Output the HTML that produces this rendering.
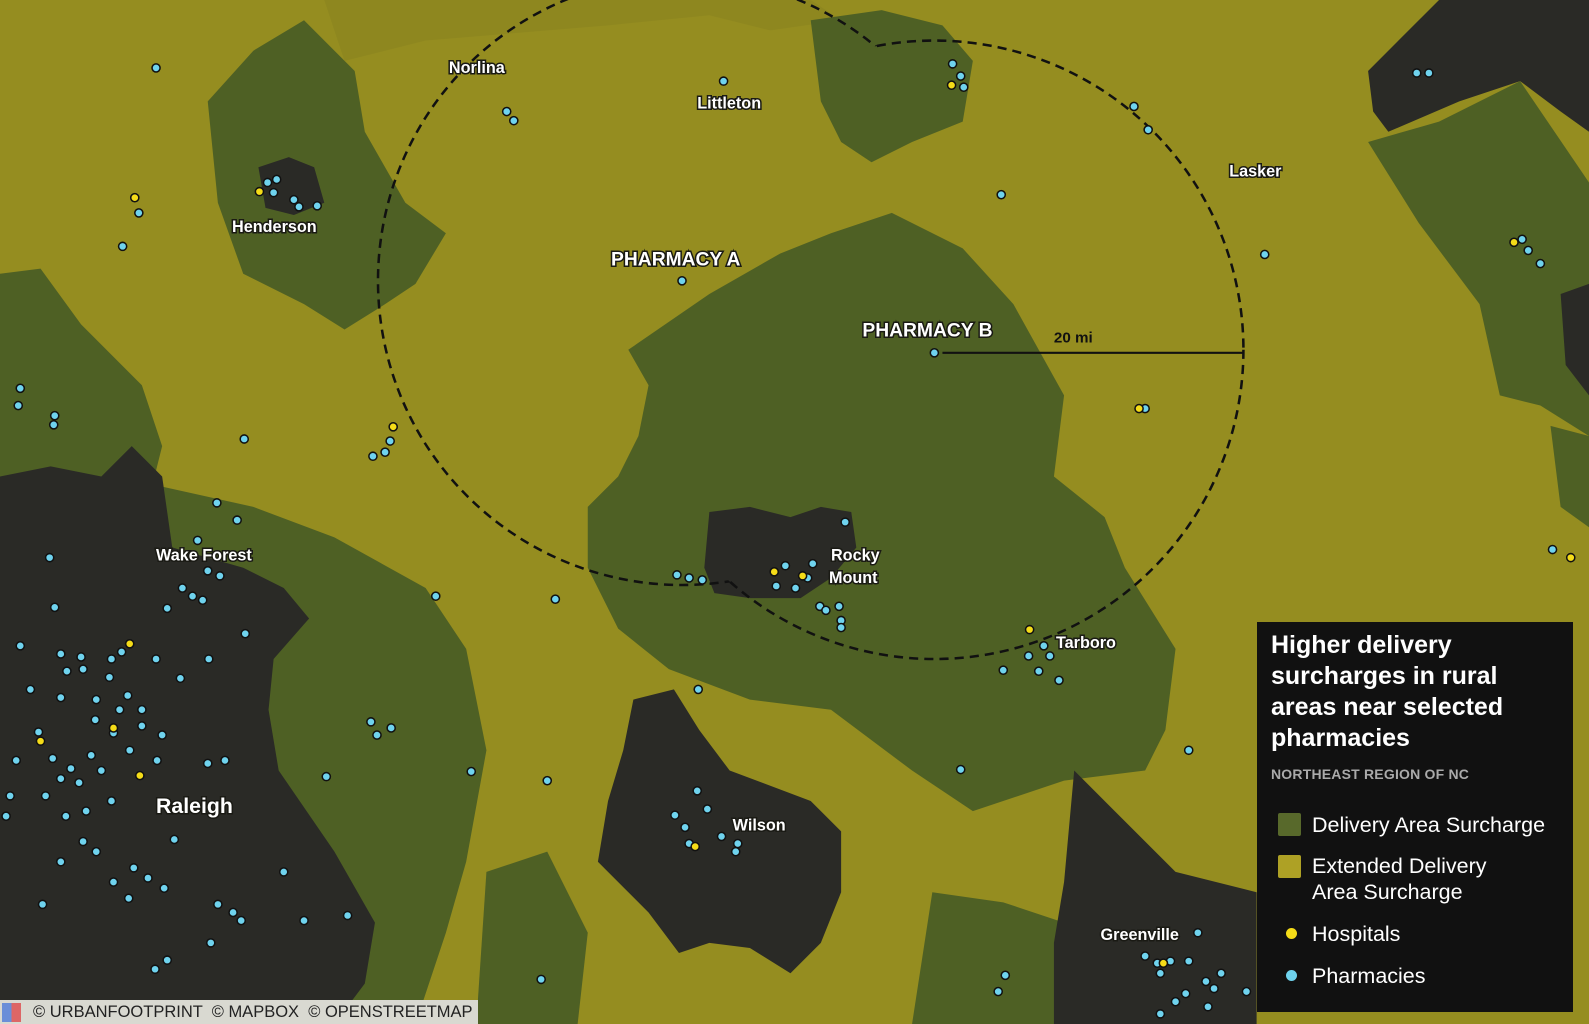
<!DOCTYPE html>
<html><head><meta charset="utf-8"><style>
html,body{margin:0;padding:0;width:1589px;height:1024px;overflow:hidden;background:#958d20;font-family:"Liberation Sans",sans-serif}
svg{position:absolute;left:0;top:0}
.lbl{font-family:"Liberation Sans",sans-serif;font-weight:bold;fill:#fff;stroke:#1a1a14;stroke-width:3;paint-order:stroke;}
#leg{position:absolute;left:1257px;top:622px;width:316px;height:390px;background:#111;color:#fff}
#leg h1{margin:0;position:absolute;left:14px;top:8px;font-size:25px;line-height:31px;font-weight:bold;width:250px}
#leg .sub{position:absolute;left:14px;top:144px;font-size:14px;color:#aaa;font-weight:bold;letter-spacing:.2px}
.it{position:absolute;left:21px;font-size:21.5px;line-height:26px;color:#fff}
.sw{position:absolute;left:21px;width:23px;height:23px;border-radius:2px}
.dt{position:absolute;left:29px;width:11px;height:11px;border-radius:50%}
#attr{position:absolute;left:0;top:1000px;width:478px;height:24px;background:#d9d9d1;color:#222;font-size:16.5px;line-height:24px;white-space:nowrap}
</style></head><body>
<svg width="1589" height="1024" viewBox="0 0 1568 1010" preserveAspectRatio="none">
<defs>
<mask id="mA"><rect width="1568" height="1010" fill="#fff"/><circle cx="922" cy="345" r="305" fill="#000"/></mask>
<mask id="mB"><rect width="1568" height="1010" fill="#fff"/><circle cx="673" cy="277" r="300" fill="#000"/></mask>
</defs>
<rect width="1568" height="1010" fill="#958d20"/>
<path d="M320 0 L800 0 L830 20 L760 30 L700 15 L600 25 L420 40 L340 60Z" fill="#8a8420" opacity=".6"/>
<g fill="#4e6024">
<path d="M205 100 L250 50 L300 20 L350 70 L360 130 L400 200 L440 230 L410 280 L380 300 L340 325 L300 300 L240 270 L215 200Z"/>
<path d="M620 345 L700 290 L770 250 L820 230 L880 210 L950 245 L1000 300 L1050 390 L1040 470 L1090 510 L1110 560 L1160 640 L1150 720 L1130 760 L1050 770 L960 800 L900 760 L820 700 L740 690 L660 660 L610 620 L580 560 L580 500 L610 470 L630 430 L640 380Z"/>
<path d="M800 20 L870 10 L930 25 L960 60 L950 120 L900 140 L860 160 L830 140 L810 100Z"/>
<path d="M0 270 L40 265 L80 320 L140 380 L160 440 L150 480 L60 470 L0 500Z"/>
<path d="M160 480 L250 500 L330 530 L420 580 L460 640 L480 740 L460 850 L440 920 L410 1010 L320 1010 L300 900 L260 760 L240 660 L170 560Z"/>
<path d="M1350 140 L1420 120 L1500 80 L1568 180 L1568 430 L1520 400 L1480 390 L1460 300 L1400 220Z"/>
<path d="M480 860 L540 840 L580 920 L570 1010 L470 1010Z"/>
<path d="M920 880 L990 890 L1050 910 L1060 1010 L900 1010Z"/>
<path d="M1530 420 L1568 430 L1568 520 L1540 500Z"/>
</g>
<g fill="#2a2a26">
<path d="M0 470 L50 460 L100 470 L130 440 L160 470 L170 540 L240 560 L280 580 L305 610 L270 650 L265 700 L275 760 L330 840 L370 910 L360 970 L330 1010 L0 1010Z"/>
<path d="M700 505 L740 500 L780 510 L810 500 L840 505 L845 540 L820 570 L790 590 L740 590 L705 585 L695 560Z"/>
<path d="M625 690 L665 680 L690 720 L720 760 L800 790 L830 820 L830 880 L810 930 L780 960 L740 935 L700 930 L670 940 L640 900 L590 850 L600 790 L615 740Z"/>
<path d="M1060 760 L1100 800 L1160 860 L1240 880 L1240 1010 L1040 1010 L1040 930 L1050 870Z"/>
<path d="M1350 70 L1380 40 L1420 0 L1568 0 L1568 130 L1540 110 L1500 80 L1440 100 L1370 130 L1355 110Z"/>
<path d="M255 165 L285 155 L310 165 L320 200 L290 212 L262 205Z"/>
<path d="M1540 290 L1568 280 L1568 390 L1545 360Z"/>
</g>
<circle cx="673" cy="277" r="300" fill="none" stroke="#111" stroke-width="2.5" stroke-dasharray="9 6" mask="url(#mA)"/>
<circle cx="922" cy="345" r="305" fill="none" stroke="#111" stroke-width="2.5" stroke-dasharray="9 6" mask="url(#mB)"/>
<line x1="930" y1="348" x2="1227" y2="348" stroke="#111" stroke-width="2"/>
<text x="1040" y="338" font-size="15" font-weight="bold" fill="#111" font-family="Liberation Sans">20 mi</text>
<g fill="#6fd3ee" stroke="#111" stroke-width="1.5">
<circle cx="154" cy="67" r="4"/><circle cx="500" cy="110" r="4"/><circle cx="507" cy="119" r="4"/><circle cx="714" cy="80" r="4"/><circle cx="940" cy="63" r="4"/><circle cx="948" cy="75" r="4"/><circle cx="951" cy="86" r="4"/><circle cx="1119" cy="105" r="4"/><circle cx="1133" cy="128" r="4"/><circle cx="988" cy="192" r="4"/><circle cx="1248" cy="251" r="4"/><circle cx="1398" cy="72" r="4"/><circle cx="1410" cy="72" r="4"/>
<circle cx="264" cy="180" r="4"/><circle cx="273" cy="177" r="4"/><circle cx="270" cy="190" r="4"/><circle cx="290" cy="197" r="4"/><circle cx="295" cy="204" r="4"/><circle cx="313" cy="203" r="4"/><circle cx="137" cy="210" r="4"/><circle cx="121" cy="243" r="4"/><circle cx="673" cy="277" r="4"/><circle cx="922" cy="348" r="4"/>
<circle cx="20" cy="383" r="4"/><circle cx="18" cy="400" r="4"/><circle cx="54" cy="410" r="4"/><circle cx="53" cy="419" r="4"/><circle cx="241" cy="433" r="4"/><circle cx="385" cy="435" r="4"/><circle cx="380" cy="446" r="4"/><circle cx="368" cy="450" r="4"/><circle cx="1508" cy="247" r="4"/><circle cx="1520" cy="260" r="4"/><circle cx="1502" cy="236" r="4"/><circle cx="1130" cy="403" r="4"/>
<circle cx="214" cy="496" r="4"/><circle cx="234" cy="513" r="4"/><circle cx="195" cy="533" r="4"/><circle cx="49" cy="550" r="4"/><circle cx="205" cy="563" r="4"/><circle cx="217" cy="568" r="4"/><circle cx="180" cy="580" r="4"/><circle cx="190" cy="588" r="4"/><circle cx="200" cy="592" r="4"/><circle cx="165" cy="600" r="4"/><circle cx="54" cy="599" r="4"/><circle cx="242" cy="625" r="4"/><circle cx="430" cy="588" r="4"/><circle cx="548" cy="591" r="4"/><circle cx="1532" cy="542" r="4"/>
<circle cx="834" cy="515" r="4"/><circle cx="668" cy="567" r="4"/><circle cx="680" cy="570" r="4"/><circle cx="693" cy="572" r="4"/><circle cx="775" cy="558" r="4"/><circle cx="802" cy="556" r="4"/><circle cx="766" cy="578" r="4"/><circle cx="785" cy="580" r="4"/><circle cx="797" cy="570" r="4"/><circle cx="809" cy="598" r="4"/><circle cx="828" cy="598" r="4"/><circle cx="815" cy="602" r="4"/><circle cx="830" cy="612" r="4"/><circle cx="830" cy="619" r="4"/>
<circle cx="1030" cy="637" r="4"/><circle cx="1036" cy="647" r="4"/><circle cx="1015" cy="647" r="4"/><circle cx="990" cy="661" r="4"/><circle cx="1025" cy="662" r="4"/><circle cx="1045" cy="671" r="4"/><circle cx="1173" cy="740" r="4"/><circle cx="948" cy="759" r="4"/><circle cx="689" cy="680" r="4"/>
<circle cx="20" cy="637" r="4"/><circle cx="60" cy="645" r="4"/><circle cx="80" cy="648" r="4"/><circle cx="110" cy="650" r="4"/><circle cx="120" cy="643" r="4"/><circle cx="154" cy="650" r="4"/><circle cx="66" cy="662" r="4"/><circle cx="82" cy="660" r="4"/><circle cx="108" cy="668" r="4"/><circle cx="178" cy="669" r="4"/><circle cx="206" cy="650" r="4"/><circle cx="30" cy="680" r="4"/><circle cx="60" cy="688" r="4"/><circle cx="95" cy="690" r="4"/><circle cx="126" cy="686" r="4"/><circle cx="118" cy="700" r="4"/><circle cx="140" cy="700" r="4"/><circle cx="94" cy="710" r="4"/><circle cx="140" cy="716" r="4"/><circle cx="38" cy="722" r="4"/><circle cx="112" cy="723" r="4"/><circle cx="160" cy="725" r="4"/><circle cx="128" cy="740" r="4"/><circle cx="16" cy="750" r="4"/><circle cx="52" cy="748" r="4"/><circle cx="70" cy="758" r="4"/><circle cx="90" cy="745" r="4"/><circle cx="100" cy="760" r="4"/><circle cx="78" cy="772" r="4"/><circle cx="60" cy="768" r="4"/><circle cx="155" cy="750" r="4"/><circle cx="205" cy="753" r="4"/><circle cx="222" cy="750" r="4"/><circle cx="10" cy="785" r="4"/><circle cx="45" cy="785" r="4"/><circle cx="110" cy="790" r="4"/><circle cx="85" cy="800" r="4"/><circle cx="6" cy="805" r="4"/><circle cx="65" cy="805" r="4"/><circle cx="172" cy="828" r="4"/><circle cx="82" cy="830" r="4"/><circle cx="95" cy="840" r="4"/><circle cx="60" cy="850" r="4"/><circle cx="132" cy="856" r="4"/><circle cx="146" cy="866" r="4"/><circle cx="162" cy="876" r="4"/><circle cx="112" cy="870" r="4"/><circle cx="280" cy="860" r="4"/><circle cx="127" cy="886" r="4"/><circle cx="42" cy="892" r="4"/><circle cx="215" cy="892" r="4"/><circle cx="230" cy="900" r="4"/><circle cx="238" cy="908" r="4"/><circle cx="300" cy="908" r="4"/><circle cx="343" cy="903" r="4"/><circle cx="208" cy="930" r="4"/><circle cx="165" cy="947" r="4"/><circle cx="153" cy="956" r="4"/>
<circle cx="366" cy="712" r="4"/><circle cx="386" cy="718" r="4"/><circle cx="372" cy="725" r="4"/><circle cx="322" cy="766" r="4"/><circle cx="465" cy="761" r="4"/><circle cx="540" cy="770" r="4"/><circle cx="534" cy="966" r="4"/>
<circle cx="688" cy="780" r="4"/><circle cx="698" cy="798" r="4"/><circle cx="666" cy="804" r="4"/><circle cx="676" cy="816" r="4"/><circle cx="712" cy="825" r="4"/><circle cx="728" cy="832" r="4"/><circle cx="680" cy="832" r="4"/><circle cx="726" cy="840" r="4"/>
<circle cx="992" cy="962" r="4"/><circle cx="985" cy="978" r="4"/><circle cx="1182" cy="920" r="4"/><circle cx="1130" cy="943" r="4"/><circle cx="1142" cy="950" r="4"/><circle cx="1155" cy="948" r="4"/><circle cx="1173" cy="948" r="4"/><circle cx="1145" cy="960" r="4"/><circle cx="1205" cy="960" r="4"/><circle cx="1190" cy="968" r="4"/><circle cx="1198" cy="975" r="4"/><circle cx="1230" cy="978" r="4"/><circle cx="1170" cy="980" r="4"/><circle cx="1160" cy="988" r="4"/><circle cx="1192" cy="993" r="4"/><circle cx="1145" cy="1000" r="4"/>
</g>
<g fill="#f5dc18" stroke="#111" stroke-width="1.5">
<circle cx="133" cy="195" r="4"/><circle cx="256" cy="189" r="4"/><circle cx="939" cy="84" r="4"/><circle cx="388" cy="421" r="4"/><circle cx="1124" cy="403" r="4"/><circle cx="1494" cy="239" r="4"/><circle cx="1550" cy="550" r="4"/><circle cx="764" cy="564" r="4"/><circle cx="792" cy="568" r="4"/><circle cx="1016" cy="621" r="4"/><circle cx="128" cy="635" r="4"/><circle cx="112" cy="718" r="4"/><circle cx="40" cy="731" r="4"/><circle cx="138" cy="765" r="4"/><circle cx="686" cy="835" r="4"/><circle cx="1148" cy="950" r="4"/>
</g>
<g class="lbl">
<text x="443" y="72" font-size="16">Norlina</text>
<text x="688" y="107" font-size="16">Littleton</text>
<text x="1213" y="174" font-size="16">Lasker</text>
<text x="229" y="229" font-size="16">Henderson</text>
<text x="603" y="262" font-size="19">PHARMACY A</text>
<text x="851" y="332" font-size="19">PHARMACY B</text>
<text x="154" y="553" font-size="16">Wake Forest</text>
<text x="820" y="553" font-size="16">Rocky</text>
<text x="818" y="575" font-size="16">Mount</text>
<text x="1042" y="639" font-size="16">Tarboro</text>
<text x="154" y="802" font-size="21">Raleigh</text>
<text x="723" y="819" font-size="16">Wilson</text>
<text x="1086" y="927" font-size="16">Greenville</text>
</g>
</svg>
<div id="leg">
<h1>Higher delivery surcharges in rural areas near selected pharmacies</h1>
<div class="sub">NORTHEAST REGION OF NC</div>
<div class="sw" style="top:191px;background:#58692b"></div><div class="it" style="left:55px;top:190px">Delivery Area Surcharge</div>
<div class="sw" style="top:233px;background:#aea125"></div><div class="it" style="left:55px;top:231px">Extended Delivery<br>Area Surcharge</div>
<div class="dt" style="top:306px;background:#f5dc18"></div><div class="it" style="left:55px;top:299px">Hospitals</div>
<div class="dt" style="top:348px;background:#6fd3ee"></div><div class="it" style="left:55px;top:341px">Pharmacies</div>
</div>
<div id="attr"><span style="position:absolute;left:2px;top:3px;width:19px;height:19px;background:linear-gradient(90deg,#6a8ed8 50%,#d66 50%)"></span><span style="position:absolute;left:33px">© URBANFOOTPRINT &nbsp;© MAPBOX &nbsp;© OPENSTREETMAP</span></div>
</body></html>
